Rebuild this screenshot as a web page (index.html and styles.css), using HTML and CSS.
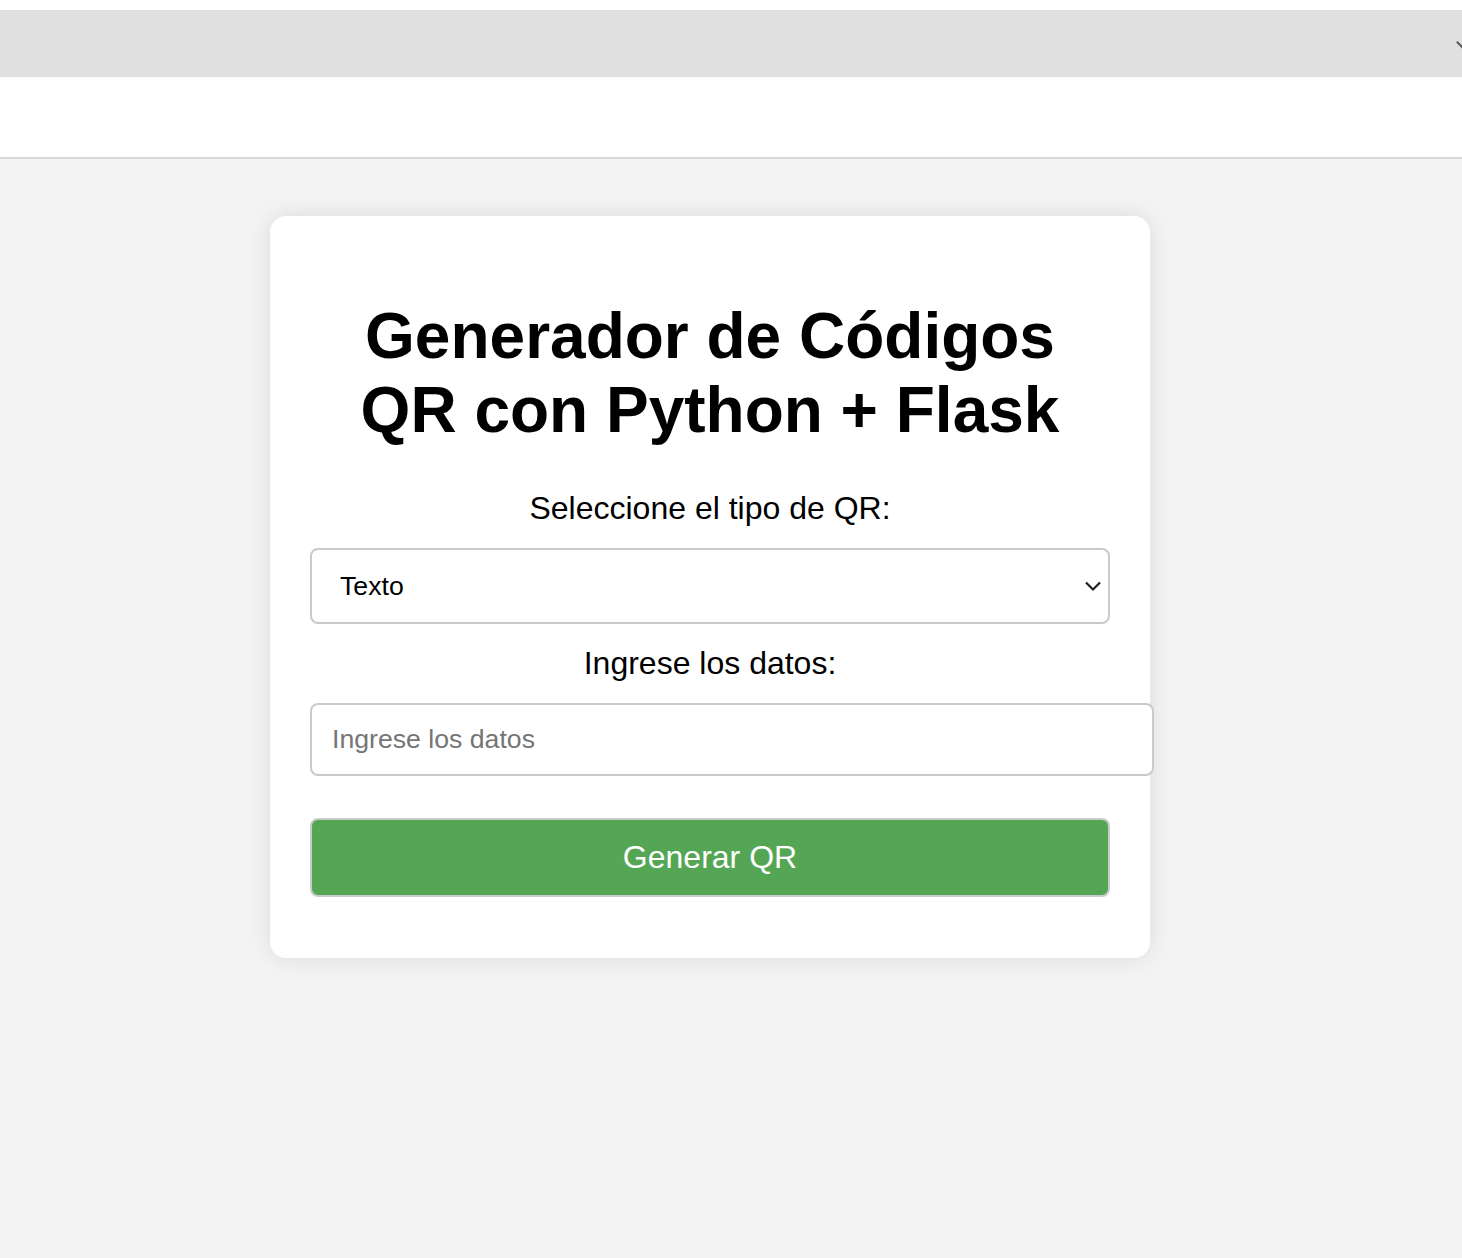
FILE: index.html
```html
<!DOCTYPE html>
<html lang="es">
<head>
<meta charset="utf-8">
<title>Generador de Códigos QR</title>
<link rel="stylesheet" href="styles.css">
</head>
<body>
<div class="top-strip"></div>
<div class="gray-bar"><span class="edge-caret"></span></div>
<div class="white-bar"></div>
<main class="page">
  <div class="card">
    <h1 class="title">Generador de Códigos QR con Python + Flask</h1>
    <form class="qr-form">
      <label class="field-label" for="tipo">Seleccione el tipo de QR:</label>
      <div class="select-wrap">
        <select id="tipo" class="select">
          <option>Texto</option>
          <option>URL</option>
        </select>
        <svg class="chevron" width="18" height="12" viewBox="0 0 18 12"><path d="M2 2.5 L9 9.5 L16 2.5" fill="none" stroke="#1f1f1f" stroke-width="2.2"/></svg>
      </div>
      <label class="field-label" for="datos">Ingrese los datos:</label>
      <input id="datos" class="text-input" type="text" placeholder="Ingrese los datos">
      <button class="btn" type="button">Generar QR</button>
    </form>
  </div>
</main>
</body>
</html>
```
FILE: styles.css
```css
html, body {
  margin: 0;
  padding: 0;
}

body {
  background: #f3f3f3;
  font-family: "Liberation Sans", Arial, sans-serif;
  color: #000;
  min-height: 1258px;
}

.top-strip {
  height: 10px;
  background: #ffffff;
}

.gray-bar {
  height: 67px;
  background: #e0e0e0;
  position: relative;
  overflow: hidden;
}

.edge-caret {
  position: absolute;
  right: -5px;
  top: 28px;
  width: 7px;
  height: 7px;
  border-right: 2px solid #555;
  border-bottom: 2px solid #555;
  transform: rotate(45deg);
}

.white-bar {
  height: 80px;
  background: #ffffff;
  border-bottom: 2px solid #d8d8d8;
}

.page {
  width: 1420px;
  padding-top: 57px;
}

.card {
  width: 800px;
  margin: 0 auto;
  padding: 40px;
  background: #ffffff;
  border-radius: 16px;
  box-shadow: 0 0 22px rgba(0, 0, 0, 0.1);
}

.title {
  margin: 43px 0;
  font-size: 64px;
  line-height: 74px;
  font-weight: bold;
  text-align: center;
}

.qr-form {
  display: flex;
  flex-direction: column;
  align-items: stretch;
  margin-bottom: 21px;
}

.field-label {
  display: block;
  text-align: center;
  font-size: 32px;
  line-height: 37px;
  margin-bottom: 21px;
}

.select-wrap {
  position: relative;
  margin-bottom: 21px;
}

.select {
  -webkit-appearance: none;
  appearance: none;
  display: block;
  box-sizing: border-box;
  width: 100%;
  height: 76px;
  margin: 0;
  padding: 0 28px;
  border: 2px solid #cacaca;
  border-radius: 8px;
  background: #ffffff;
  font-family: "Liberation Sans", Arial, sans-serif;
  font-size: 26.67px;
  color: #000;
  outline: none;
}

.chevron {
  position: absolute;
  left: 774px;
  top: 32px;
  pointer-events: none;
}

.text-input {
  box-sizing: content-box;
  width: 800px;
  margin: 0 0 42px 0;
  padding: 19px 20px;
  border: 2px solid #cacaca;
  border-radius: 8px;
  background: #ffffff;
  font-family: "Liberation Sans", Arial, sans-serif;
  font-size: 26.67px;
  line-height: 31px;
  height: 31px;
  color: #000;
  outline: none;
}

.text-input::placeholder {
  color: #757575;
}

.btn {
  display: block;
  box-sizing: border-box;
  width: 100%;
  height: 79px;
  margin: 0;
  padding: 0;
  border: 2px solid #cbcbcb;
  border-radius: 8px;
  background: #54a654;
  color: #ffffff;
  font-family: "Liberation Sans", Arial, sans-serif;
  font-size: 32px;
  cursor: pointer;
}
```
